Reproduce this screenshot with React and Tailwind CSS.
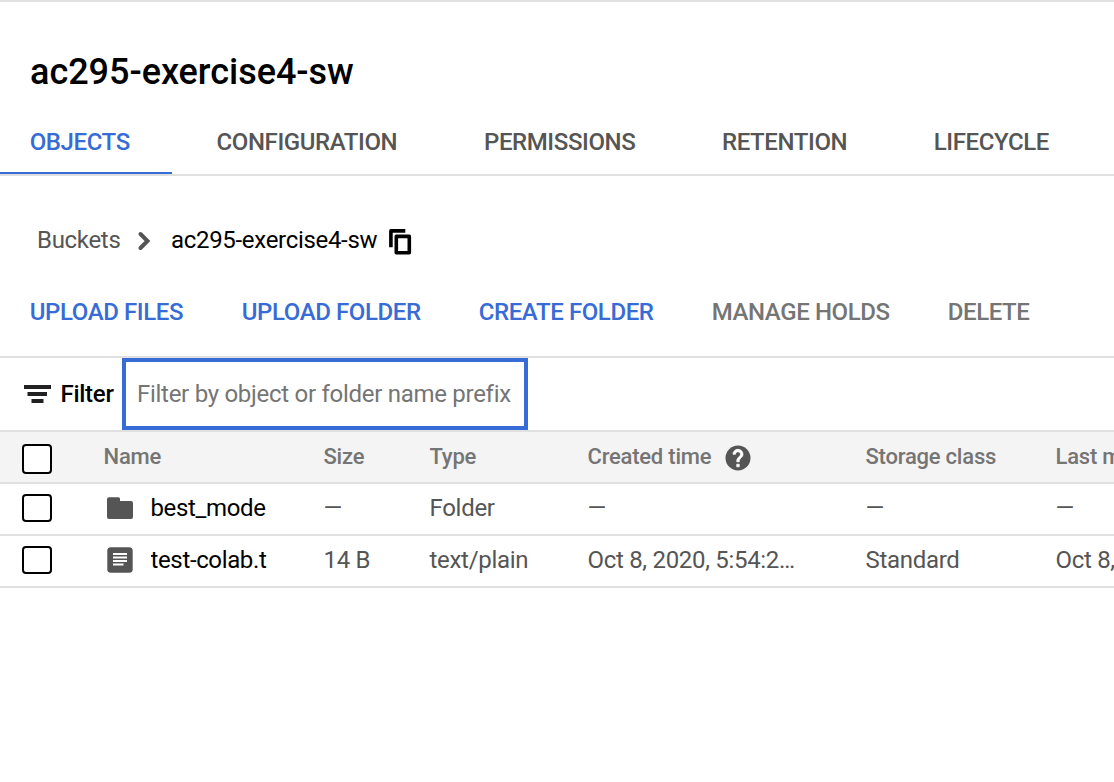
const blue = "text-[#376bd5]";

function Tab({ children, className }) {
  return <div className={`flex shrink-0 whitespace-nowrap ${className}`}>{children}</div>;
}

function Checkbox({ className }) {
  return <span role="checkbox" aria-checked="false" className={`block w-[30px] rounded border-2 border-black bg-white ${className}`} />;
}

function FilterIcon() {
  return (
    <svg className="h-[18px] w-[27px]" viewBox="0 0 27 18" fill="#212121">
      <path d="M0 0h27v4H0zM3.500 7h19.500v4h-19.500zM7.500 14h12v4h-12z" />
    </svg>
  );
}

function FolderIcon() {
  return (
    <svg className="h-[26px] w-[26px]" viewBox="0 0 26 26" fill="#555">
      <path d="M2 2.200h9.500q1.500 0 1.500 1.500V6h11q2 0 2 2v14q0 2-2 2H2q-2 0-2-2V4.200q0-2 2-2z" />
    </svg>
  );
}

function DocIcon() {
  return (
    <svg className="h-[26px] w-[26px]" viewBox="0 0 26 26">
      <rect x="0.300" y="0.300" width="25.400" height="25.400" rx="3.500" fill="#555" />
      <path d="M6 6h14v2H6zM6 9.500h14v2H6zM6 13h14v2H6zM6 16.500h10.500v2H6z" fill="#fff" />
    </svg>
  );
}

function HelpIcon() {
  return (
    <svg className="h-[30px] w-[30px]" viewBox="0 0 24 24">
      <circle cx="12" cy="12" r="10" fill="#555" />
      <path d="M11 17h2v2h-2zM15.070 11.250l-.9.920C13.450 12.900 13 13.500 13 15h-2v-.500c0-1.100.450-2.100 1.170-2.830l1.240-1.260c.370-.360.590-.860.590-1.410 0-1.100-.9-2-2-2s-2 .9-2 2H8c0-2.210 1.790-4 4-4s4 1.790 4 4c0 .880-.360 1.680-.930 2.250z" fill="#fff" stroke="#fff" strokeWidth="0.600" />
    </svg>
  );
}

const grid = "grid grid-cols-[103.500px_220px_106px_158px_278px_190px_300px] border-b-2 border-[#e0e0e0]";

function Row({ icon, name, cells }) {
  return (
    <div className={`${grid} h-[52px] text-[24px] leading-[48px] tracking-[-0.3px] text-[#555]`}>
      <div className="pl-[22px] pt-[10px]"><Checkbox className="h-7" /></div>
      <div className="flex pl-[3.5px]">
        <span className="mr-[17.5px] mt-[11px]">{icon}</span>
        <span className="h-12 w-[116px] overflow-hidden whitespace-nowrap tracking-[-0.36px] text-black">{name}</span>
      </div>
      {cells.map((c, i) => <div key={i} className="whitespace-nowrap">{c}</div>)}
    </div>
  );
}

export default function App() {
  return (
    <div className="h-[782px] w-[1114px] overflow-hidden border-t-2 border-[#e0e0e0] bg-white font-['Roboto',sans-serif] text-black">
      <h1 className="pl-[30px] pt-[48px] text-[36px] font-medium leading-[44px] tracking-[-0.03px]">ac295-exercise4-sw</h1>
      <nav className="mt-4 flex h-[66px] border-b-2 border-[#e0e0e0] text-[24px] font-medium leading-[64px] tracking-[-0.4px] text-[#555]">
        <Tab className="w-[172px] border-b-2 border-[#376bd5] pl-[29.7px] text-[#376bd5]">OBJECTS</Tab>
        <Tab className="w-[267px] pl-[44.6px]">CONFIGURATION</Tab>
        <Tab className="w-[238px] pl-[45px]">PERMISSIONS</Tab>
        <Tab className="w-[212px] pl-[45px]">RETENTION</Tab>
        <Tab className="w-[200px] pl-[44.8px]">LIFECYCLE</Tab>
      </nav>
      <div className="mt-[44px] flex h-10 pl-[37px] text-[24px] leading-10 tracking-[-0.31px]">
        <span className="w-[100px] text-[#555]">Buckets</span>
        <svg className="mt-[11px] h-5 w-[14px]" viewBox="0 0 14 20" fill="none" stroke="#555" strokeWidth="4" strokeLinecap="round"><path d="M3.500 3l7 7-7 7" /></svg>
        <span className="ml-5 w-[218px]">ac295-exercise4-sw</span>
        <svg className="mt-[9px] h-[26px] w-[23px]" viewBox="0 0 23 26" fill="none" stroke="#000" strokeWidth="3.600" strokeLinejoin="round"><path d="M1.900 18.300V1.900H16.300" /><rect x="7.300" y="7.400" width="13" height="16.400" /></svg>
      </div>
      <div className="mt-7 flex h-[70px] border-b-2 border-[#e0e0e0] pl-[29.7px] text-[24px] font-medium leading-[48px] tracking-[-0.39px] text-[#757575]">
        <span className={`w-[212px] ${blue}`}>UPLOAD FILES</span>
        <span className={`w-[237px] ${blue}`}>UPLOAD FOLDER</span>
        <span className={`w-[233px] ${blue}`}>CREATE FOLDER</span>
        <span className="w-[236px]">MANAGE HOLDS</span>
        <span>DELETE</span>
      </div>
      <div className="flex h-[74px] border-b-2 border-[#e0e0e0] text-[24px] leading-[72px] tracking-[-0.28px]">
        <span className="ml-[23.5px] mt-[27px] w-[37px]"><FilterIcon /></span>
        <span className="w-[61.5px] font-medium">Filter</span>
        <div className="h-[72px] w-[406px] whitespace-nowrap border-4 border-[#376bd5] pl-[11px] leading-[64px] text-[#757575]">Filter by object or folder name prefix</div>
      </div>
      <div className={`${grid} h-[52px] bg-[#f4f4f4] text-[22px] font-medium leading-[50px] tracking-[-0.22px] text-[#757575]`}>
        <div className="pl-[22px] pt-3"><Checkbox className="h-[30px]" /></div>
        <div>Name</div>
        <div>Size</div>
        <div>Type</div>
        <div className="flex"><span className="w-[135.5px]">Created time</span><span className="mt-[11px]"><HelpIcon /></span></div>
        <div>Storage class</div>
        <div>Last modified</div>
      </div>
      <Row icon={<FolderIcon />} name="best_mode" cells={["—", "Folder", "—", "—", "—"]} />
      <Row icon={<DocIcon />} name="test-colab.txt" cells={["14 B", "text/plain", "Oct 8, 2020, 5:54:2…", "Standard", "Oct 8, 2020, 5:54:22 PM"]} />
    </div>
  );
}
